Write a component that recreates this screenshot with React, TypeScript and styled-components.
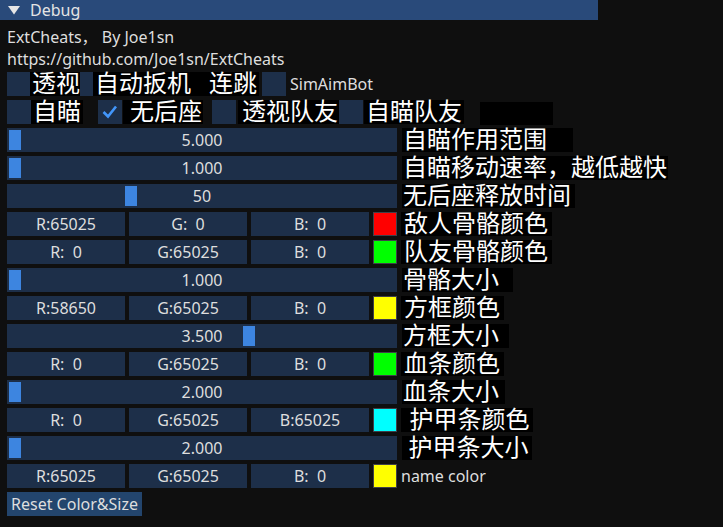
import React from "react";
import styled, { createGlobalStyle } from "styled-components";

const GlobalStyle = createGlobalStyle`
  html, body {
    margin: 0;
    padding: 0;
    background: #0f0f0f;
  }
  * {
    box-sizing: border-box;
  }
`;

const Page = styled.div`
  width: 723px;
  height: 527px;
  overflow: hidden;
  background: #0f0f0f;
  font-family: "Noto Sans", "Noto Sans CJK SC", sans-serif;
  font-size: 16px;
  color: #dedede;
`;

const TitleBar = styled.div`
  width: 598px;
  height: 20px;
  background: #294a7a;
  display: flex;
  align-items: center;
  gap: 10px;
  padding-left: 8px;
  line-height: 20px;
  color: #e4e4e4;
`;

const Body = styled.div`
  display: flex;
  flex-direction: column;
  gap: 4px;
  padding: 8px 7px;
`;

const TextLine = styled.div`
  height: 18px;
  line-height: 18px;
  white-space: pre;
`;

const Row = styled.div`
  display: flex;
  align-items: flex-start;
  height: 24px;
`;

const CheckBox = styled.div<{ $ml?: number }>`
  flex-shrink: 0;
  width: 24px;
  height: 24px;
  margin-left: ${(p) => p.$ml ?? 0}px;
  background: #1d2f49;
  display: flex;
  align-items: center;
  justify-content: center;
`;

const CjkLabel = styled.div<{ $ml?: number; $pl?: number; $pr?: number }>`
  flex-shrink: 0;
  height: 24px;
  line-height: 20px;
  margin-left: ${(p) => p.$ml ?? 0}px;
  padding-left: ${(p) => p.$pl ?? 1}px;
  padding-right: ${(p) => p.$pr ?? 4}px;
  background: #000;
  color: #fff;
  font-family: "Noto Sans CJK SC", sans-serif;
  font-size: 24px;
  white-space: pre;
`;

const PlainLabel = styled.div<{ $ml?: number }>`
  flex-shrink: 0;
  margin-left: ${(p) => p.$ml ?? 4}px;
  line-height: 24px;
  white-space: pre;
`;

const BlackBlock = styled.div<{ $ml: number; $w: number }>`
  flex-shrink: 0;
  margin-left: ${(p) => p.$ml}px;
  margin-top: 2px;
  width: ${(p) => p.$w}px;
  height: 23px;
  background: #000;
`;

const SliderFrame = styled.div`
  position: relative;
  flex-shrink: 0;
  width: 390px;
  height: 24px;
  background: #1d2f49;
  line-height: 24px;
  text-align: center;
  white-space: pre;
`;

const Grab = styled.div<{ $pos: number }>`
  position: absolute;
  top: 2px;
  left: ${(p) => p.$pos}px;
  width: 12px;
  height: 20px;
  background: #3d85e0;
`;

const SliderValue = styled.span`
  position: relative;
`;

const Field = styled.div`
  flex-shrink: 0;
  width: 118px;
  height: 24px;
  margin-right: 4px;
  background: #1d2f49;
  line-height: 24px;
  text-align: center;
  white-space: pre;
`;

const Swatch = styled.div<{ $color: string }>`
  flex-shrink: 0;
  width: 24px;
  height: 24px;
  background: ${(p) => p.$color};
  border: 1px solid #40404a;
`;

const ResetButton = styled.div`
  align-self: flex-start;
  height: 24px;
  line-height: 24px;
  padding: 0 4px;
  background: #23456d;
  white-space: pre;
`;

const Arrow = () => (
  <svg width="12" height="9" viewBox="0 0 12 9">
    <polygon points="0,0 12,0 6,8.5" fill="#e6e6e6" />
  </svg>
);

const Check = () => (
  <svg width="24" height="24" viewBox="0 0 24 24">
    <polyline
      points="5.5,12 10,16.5 18,6.5"
      fill="none"
      stroke="#4296fa"
      strokeWidth="2.6"
    />
  </svg>
);

type SliderProps = { value: string; pos: number; label: string; pr?: number };

const SliderRow = ({ value, pos, label, pr }: SliderProps) => (
  <Row>
    <SliderFrame>
      <Grab $pos={pos} />
      <SliderValue>{value}</SliderValue>
    </SliderFrame>
    <CjkLabel $ml={5} $pl={1} $pr={pr}>
      {label}
    </CjkLabel>
  </Row>
);

type ColorProps = { r: string; g: string; b: string; color: string; label: string; plain?: boolean };

const ColorRow = ({ r, g, b, color, label, plain }: ColorProps) => (
  <Row>
    <Field>R:{r}</Field>
    <Field>G:{g}</Field>
    <Field>B:{b}</Field>
    <Swatch $color={color} />
    {plain ? (
      <PlainLabel $ml={4}>{label}</PlainLabel>
    ) : (
      <CjkLabel $ml={4} $pl={3}>
        {label}
      </CjkLabel>
    )}
  </Row>
);

export default function App() {
  return (
    <Page>
      <GlobalStyle />
      <TitleBar>
        <Arrow />
        <span>Debug</span>
      </TitleBar>
      <Body>
        <TextLine>ExtCheats， By Joe1sn</TextLine>
        <TextLine>https://github.com/Joe1sn/ExtCheats</TextLine>

        <Row>
          <CheckBox />
          <CjkLabel $ml={-1} $pl={2} $pr={2}>透视</CjkLabel>
          <CheckBox $ml={-2} />
          <CjkLabel $ml={-11} $pl={2} $pr={2}>自动扳机</CjkLabel>
          <CheckBox $ml={0} />
          <CjkLabel $ml={-24} $pl={16} $pr={2}>连跳</CjkLabel>
          <CheckBox $ml={3} />
          <PlainLabel $ml={4}>SimAimBot</PlainLabel>
        </Row>

        <Row>
          <CheckBox />
          <CjkLabel $ml={0} $pl={2} $pr={2}>自瞄</CjkLabel>
          <CheckBox $ml={15}>
            <Check />
          </CheckBox>
          <CjkLabel $ml={1} $pl={7} $pr={1}>无后座</CjkLabel>
          <CheckBox $ml={9} />
          <CjkLabel $ml={2} $pl={4} $pr={1}>透视队友</CjkLabel>
          <CheckBox $ml={0} />
          <CjkLabel $ml={1} $pl={2} $pr={2}>自瞄队友</CjkLabel>
          <BlackBlock $ml={16} $w={73} />
        </Row>

        <SliderRow value="5.000" pos={2} label="自瞄作用范围" pr={26} />
        <SliderRow value="1.000" pos={2} label="自瞄移动速率，越低越快" pr={1} />
        <SliderRow value="50" pos={118} label="无后座释放时间" />
        <ColorRow r="65025" g="  0" b="  0" color="#ff0000" label="敌人骨骼颜色" />
        <ColorRow r="  0" g="65025" b="  0" color="#00ff00" label="队友骨骼颜色" />
        <SliderRow value="1.000" pos={2} label="骨骼大小" pr={14} />
        <ColorRow r="58650" g="65025" b="  0" color="#ffff00" label="方框颜色" />
        <SliderRow value="3.500" pos={236} label="方框大小" pr={10} />
        <ColorRow r="  0" g="65025" b="  0" color="#00ff00" label="血条颜色" />
        <SliderRow value="2.000" pos={2} label="血条大小" pr={6} />
        <ColorRow r="  0" g="65025" b="65025" color="#00ffff" label=" 护甲条颜色" />
        <SliderRow value="2.000" pos={2} label=" 护甲条大小" />
        <ColorRow r="65025" g="65025" b="  0" color="#ffff00" label="name color" plain />
        <ResetButton>Reset Color&amp;Size</ResetButton>
      </Body>
    </Page>
  );
}
